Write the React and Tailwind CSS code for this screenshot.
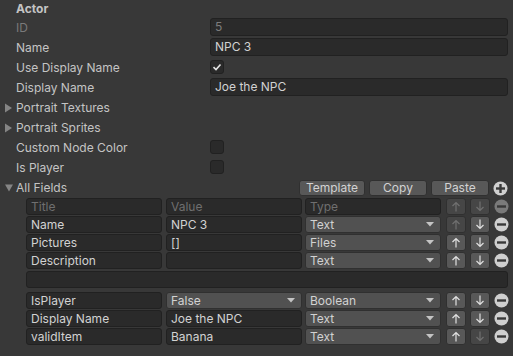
import React from "react";

const font = { fontFamily: "Inter, 'Noto Sans', sans-serif" };

function TextField({ value, disabled, className = "" }) {
  return (
    <div
      className={`h-[18px] rounded-[3px] border border-[#212121] bg-[#2a2a2a] px-[4px] text-[12px] leading-[16px] ${disabled ? "text-[#7d7d7d]" : "text-[#d2d2d2]"} ${className}`}
    >
      {value}
    </div>
  );
}

function Check({ checked }) {
  return (
    <div className="mt-[2px] flex h-[14px] w-[14px] items-center justify-center rounded-[3px] border border-[#212121] bg-[#2a2a2a]">
      {checked && (
        <svg width="10" height="10" viewBox="0 0 10 10">
          <path d="M1.5 5.2 L4 7.5 L8.5 2.5" stroke="#e4e4e4" strokeWidth="1.6" fill="none" />
        </svg>
      )}
    </div>
  );
}

function Row({ label, disabled, children, fold }) {
  return (
    <div className="flex h-5 items-start">
      <div className="flex w-[210px] items-start">
        <div className="flex h-5 w-4 items-center justify-start pl-[5px]">
          {fold === "right" && (
            <svg width="8" height="10" viewBox="0 0 8 10">
              <path d="M0 0.5 L7 5 L0 9.5 Z" fill="#858585" />
            </svg>
          )}
        </div>
        <span className={`text-[12px] leading-[20px] ${disabled ? "text-[#7a7a7a]" : "text-[#c4c4c4]"}`}>{label}</span>
      </div>
      <div className="flex-1 pr-[5px]">{children}</div>
    </div>
  );
}

function Dropdown({ value, className = "" }) {
  return (
    <div className={`flex h-[17px] items-center justify-between rounded-[3px] border border-[#303030] bg-[#515151] pl-[4px] pr-[6px] text-[12px] text-[#d2d2d2] ${className}`}>
      <span className="leading-[15px]">{value}</span>
      <svg width="8" height="5" viewBox="0 0 8 5">
        <path d="M0 0 L8 0 L4 4.5 Z" fill="#c4c4c4" />
      </svg>
    </div>
  );
}

function Cell({ value, placeholder, className = "" }) {
  return (
    <div className={`h-[17px] rounded-[3px] border border-[#212121] bg-[#2a2a2a] px-[4px] text-[12px] leading-[15px] ${placeholder ? "text-[#6f6f6f]" : "text-[#d2d2d2]"} ${className}`}>
      {value}
    </div>
  );
}

function Arrow({ dir, disabled }) {
  return (
    <div className={`flex h-[17px] w-[20px] items-center justify-center rounded-[3px] border border-[#303030] ${disabled ? "bg-[#464646]" : "bg-[#585858]"}`}>
      <svg width="10" height="11" viewBox="0 0 10 11">
        {dir === "up" ? (
          <path d="M5 10.5 V1.5 M1.5 5 L5 1.5 L8.5 5" stroke={disabled ? "#707070" : "#e0e0e0"} strokeWidth="1.2" fill="none" />
        ) : (
          <path d="M5 0.5 V9.5 M1.5 6 L5 9.5 L8.5 6" stroke={disabled ? "#707070" : "#e0e0e0"} strokeWidth="1.2" fill="none" />
        )}
      </svg>
    </div>
  );
}

function CircleIcon({ plus, dim }) {
  const c = dim ? "#7a7a7a" : "#cfcfcf";
  return (
    <svg width="15" height="15" viewBox="0 0 15 15">
      <circle cx="7.5" cy="7.5" r="7" fill={c} />
      <rect x="3" y="6.3" width="9" height="2.4" fill="#383838" />
      {plus && <rect x="6.3" y="3" width="2.4" height="9" fill="#383838" />}
    </svg>
  );
}

function FieldRow({ title, value, valueDropdown, type, upDisabled, downDisabled, header }) {
  return (
    <div className="flex h-[18px] items-start pl-[26px]">
      <Cell value={title} placeholder={header} className="w-[136px]" />
      <div className="ml-[4px] w-[136px]">
        {valueDropdown ? <Dropdown value={value} /> : <Cell value={value} placeholder={header} />}
      </div>
      <div className="ml-[3px] w-[136px]">
        {header ? <Cell value={type} placeholder /> : <Dropdown value={type} />}
      </div>
      <div className="ml-[5px]">
        <Arrow dir="up" disabled={upDisabled} />
      </div>
      <div className="ml-[4px]">
        <Arrow dir="down" disabled={downDisabled} />
      </div>
      <div className="ml-[4px] mt-[1px]">
        <CircleIcon dim={header} />
      </div>
    </div>
  );
}

export default function App() {
  return (
    <div className="h-[356px] w-[513px] overflow-hidden bg-[#383838] select-none" style={font}>
      <div className="flex h-[18px] items-center pl-4">
        <span className="text-[12px] font-bold leading-[16px] text-[#c4c4c4]">Actor</span>
      </div>
      <Row label="ID" disabled>
        <TextField value="5" disabled />
      </Row>
      <Row label="Name">
        <TextField value="NPC 3" />
      </Row>
      <Row label="Use Display Name">
        <Check checked />
      </Row>
      <Row label="Display Name">
        <TextField value="Joe the NPC" />
      </Row>
      <Row label="Portrait Textures" fold="right" />
      <Row label="Portrait Sprites" fold="right" />
      <Row label="Custom Node Color">
        <Check />
      </Row>
      <Row label="Is Player">
        <Check />
      </Row>
      <div className="flex h-5 items-center">
        <div className="flex w-4 pl-[5px]">
          <svg width="9" height="8" viewBox="0 0 9 8">
            <path d="M0 0.5 L8 0.5 L4 7.5 Z" fill="#858585" />
          </svg>
        </div>
        <span className="flex-1 text-[12px] leading-[20px] text-[#c4c4c4]">All Fields</span>
        <div className="flex items-center gap-[4px] pr-[5px]">
          {["Template", "Copy", "Paste"].map((b, i) => (
            <div
              key={b}
              className={`flex h-[16px] items-center justify-center rounded-[3px] border border-[#303030] bg-[#585858] text-[12px] text-[#d2d2d2] ${i === 0 ? "w-[66px]" : "w-[58px]"}`}
            >
              {b}
            </div>
          ))}
          <CircleIcon plus />
        </div>
      </div>
      <div className="flex flex-col">
        <FieldRow header title="Title" value="Value" type="Type" upDisabled downDisabled />
        <FieldRow title="Name" value="NPC 3" type="Text" upDisabled />
        <FieldRow title="Pictures" value="[]" type="Files" />
        <FieldRow title="Description" value="" type="Text" />
        <div className="mt-[1px] pl-[26px] pr-[5px]">
          <Cell value="" />
        </div>
        <div className="h-[4px]" />
        <FieldRow title="IsPlayer" value="False" valueDropdown type="Boolean" />
        <FieldRow title="Display Name" value="Joe the NPC" type="Text" />
        <FieldRow title="validItem" value="Banana" type="Text" downDisabled />
      </div>
    </div>
  );
}
